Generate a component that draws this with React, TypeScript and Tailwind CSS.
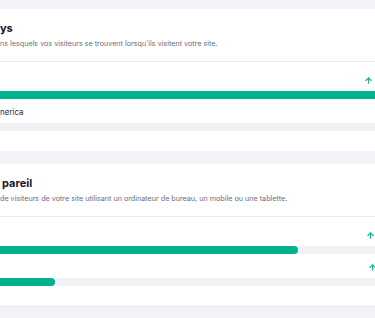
import { ArrowUp } from "lucide-react";

const font = { fontFamily: "Inter, 'Noto Sans', sans-serif" };

function Trend({ spacer }: { spacer: string }) {
    return (
        <div className="flex items-center gap-[2px]">
            <ArrowUp className="h-[9px] w-[9px] text-[#14b592]" strokeWidth={3} />
            <div className={spacer} />
        </div>
    );
}

function Bar({ fill }: { fill: string }) {
    return (
        <div className="h-2 w-full rounded-r-full bg-[#f1f2f5]">
            <div className={`h-2 rounded-r-full bg-[#02b18e] ${fill}`} />
        </div>
    );
}

function CardHeader({ title, text, shift }: { title: string; text: string; shift: string }) {
    return (
        <div className="border-b border-[#e9eaee] pt-[13px] pb-[12px]">
            <h2 className={`text-[11px] leading-[12px] font-bold text-[#16162a] ${shift}`}>{title}</h2>
            <p className="mt-[4px] text-[7.2px] leading-[11px] text-[#6c6c7c]">{text}</p>
        </div>
    );
}

export default function App() {
    return (
        <div style={font} className="h-[318px] w-[375px] overflow-hidden bg-[#f2f3f6] pt-[9px]">
            <section className="h-[142px] w-[420px] bg-white">
                <CardHeader
                    title="ys"
                    shift="ml-0"
                    text="ns lesquels vos visiteurs se trouvent lorsqu'ils visitent votre site."
                />
                <div className="space-y-[7px] pt-[12px]">
                    <div>
                        <div className="flex h-[12px] items-center justify-end">
                            <Trend spacer="w-[45px]" />
                        </div>
                        <div className="mt-[5px]">
                            <Bar fill="w-full" />
                        </div>
                    </div>
                    <div>
                        <div className="flex h-[12px] items-center">
                            <span className="text-[8px] text-[#2c2c3a]">nerica</span>
                        </div>
                        <div className="mt-[5px]">
                            <Bar fill="w-0" />
                        </div>
                    </div>
                </div>
            </section>

            <section className="mt-[13px] h-[143px] w-[420px] border-b border-[#e6e7eb] bg-white">
                <CardHeader
                    title="pareil"
                    shift="ml-[2px]"
                    text="de visiteurs de votre site utilisant un ordinateur de bureau, un mobile ou une tablette."
                />
                <div className="space-y-[7px] pt-[12px]">
                    <div>
                        <div className="flex h-[12px] items-center justify-end">
                            <Trend spacer="w-[43px]" />
                        </div>
                        <div className="mt-[5px]">
                            <Bar fill="w-[298px]" />
                        </div>
                    </div>
                    <div>
                        <div className="flex h-[12px] items-center justify-end">
                            <Trend spacer="w-[41px]" />
                        </div>
                        <div className="mt-[5px]">
                            <Bar fill="w-[55px]" />
                        </div>
                    </div>
                </div>
            </section>
        </div>
    );
}
